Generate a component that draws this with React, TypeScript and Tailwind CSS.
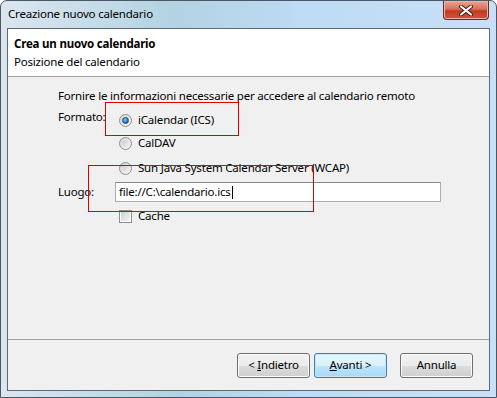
import React from "react";

function Radio({ checked }: { checked?: boolean }) {
  return (
    <span className="flex h-[13px] w-[13px] shrink-0 items-center justify-center rounded-full border border-[#8e8f8f] bg-[linear-gradient(135deg,#d4d4d4,#f7f7f7)]">
      {checked ? (
        <span className="h-[7px] w-[7px] rounded-full border border-[#1b4f7a] bg-[radial-gradient(circle_at_40%_35%,#8ed0f5,#1f79b6_60%,#0f4d80)]" />
      ) : (
        <span className="h-[7px] w-[7px] rounded-full bg-[linear-gradient(135deg,#cbcbcb,#f3f3f3)]" />
      )}
    </span>
  );
}

function Check() {
  return (
    <span className="flex h-[13px] w-[13px] shrink-0 items-center justify-center border border-[#8e8f8f] bg-white">
      <span className="h-[9px] w-[9px] bg-[linear-gradient(135deg,#cfcfcf,#f4f4f4)]" />
    </span>
  );
}

function Btn({ children, focused }: { children: React.ReactNode; focused?: boolean }) {
  return (
    <button
      className={`flex h-[25px] w-[73px] items-center justify-center rounded-[3px] border text-black ${
        focused
          ? "border-[#3c7fb1] bg-[linear-gradient(#eaf6fd_0%,#d9f0fc_50%,#bee6fd_50%,#a7d9f5_100%)] shadow-[inset_0_0_0_1px_#c8e6f7]"
          : "border-[#707070] bg-[linear-gradient(#f2f2f2_0%,#ebebeb_50%,#dddddd_50%,#cfcfcf_100%)] shadow-[inset_0_0_0_1px_#fcfcfc]"
      }`}
    >
      <span className="whitespace-pre">{children}</span>
    </button>
  );
}

export default function App() {
  return (
    <div className="relative flex h-[398px] w-[497px] flex-col overflow-hidden rounded-t-[7px] border border-[#4a5866] bg-[linear-gradient(90deg,#dbe6ef,#b2d3e2_35%,#bcdbf4_60%,#c8e0f7)] font-['Noto_Sans',sans-serif] text-[11.5px] tracking-[-0.2px] text-black">
      {/* title bar */}
      <div className="flex h-[27px] shrink-0 items-start justify-between">
        <span className="pl-[7px] pt-[5px] leading-4 text-black">Creazione nuovo calendario</span>
        <div className="mr-[7px] flex h-[19px] w-[46px] items-center justify-center rounded-b-[4px] border border-t-0 border-[#6e2a22] bg-[linear-gradient(#e8a596_0%,#d8705d_45%,#c2391f_55%,#d2553b_100%)] shadow-[inset_0_0_0_1px_#ecb3a6]">
          <svg width="14" height="11" viewBox="0 0 14 11">
            <path d="M2 1.5 L12 9.5 M12 1.5 L2 9.5" stroke="#4a1a14" strokeWidth="4" strokeLinecap="round" />
            <path d="M2 1.5 L12 9.5 M12 1.5 L2 9.5" stroke="#ffffff" strokeWidth="2.2" strokeLinecap="round" />
          </svg>
        </div>
      </div>

      {/* client */}
      <div className="mx-[6px] mb-[6px] flex flex-1 flex-col border border-[#5d6b78] bg-[#f0f0f0]">
        <div className="flex h-[48px] shrink-0 flex-col border-b border-[#a0a0a0] bg-white pl-[6px] pt-[7px] leading-4">
          <span className="font-bold">Crea un nuovo calendario</span>
          <span className="mt-[2px]">Posizione del calendario</span>
        </div>

        <div className="flex flex-1 flex-col pl-[50px] pt-[11px] leading-4">
          <span>Fornire le informazioni necessarie per accedere al calendario remoto</span>
          <div className="mt-[5px] flex">
            <span className="w-[57px] shrink-0">Formato:</span>
            <div className="flex flex-col pl-[4px] pt-[3px]">
              <label className="flex h-4 items-center gap-[6px]">
                <Radio checked />
                <span>iCalendar (ICS)</span>
              </label>
              <label className="mt-[7px] flex h-4 items-center gap-[6px]">
                <Radio />
                <span>CalDAV</span>
              </label>
              <label className="mt-[9px] flex h-4 items-center gap-[6px]">
                <Radio />
                <span>Sun Java System Calendar Server (WCAP)</span>
              </label>
            </div>
          </div>
          <div className="mt-[6px] flex items-center">
            <span className="w-[57px] shrink-0">Luogo:</span>
            <div className="flex h-[20px] w-[326px] items-center border border-[#abadb3] border-t-[#858b93] bg-white pl-[3px]">
              <span>file://C:\calendario.ics</span>
              <span className="ml-[1px] h-[13px] w-px bg-black" />
            </div>
          </div>
          <label className="ml-[61px] mt-[6px] flex h-4 items-center gap-[6px]">
            <Check />
            <span>Cache</span>
          </label>
        </div>

        <div className="flex h-[51px] shrink-0 items-center justify-end border-t border-[#a0a0a0] pr-[16px]">
          <Btn>
            {"< "}
            <span className="underline">I</span>ndietro
          </Btn>
          <div className="ml-[4px]">
            <Btn focused>
              <span className="underline">A</span>vanti {">"}
            </Btn>
          </div>
          <div className="ml-[13px]">
            <Btn>Annulla</Btn>
          </div>
        </div>
      </div>

      {/* annotation boxes */}
      <div className="pointer-events-none absolute left-[104px] top-[101px] h-[34px] w-[134px] border border-[#e00000]" />
      <div className="pointer-events-none absolute left-[87px] top-[164px] h-[47px] w-[226px] border border-[#e00000]" />
    </div>
  );
}
